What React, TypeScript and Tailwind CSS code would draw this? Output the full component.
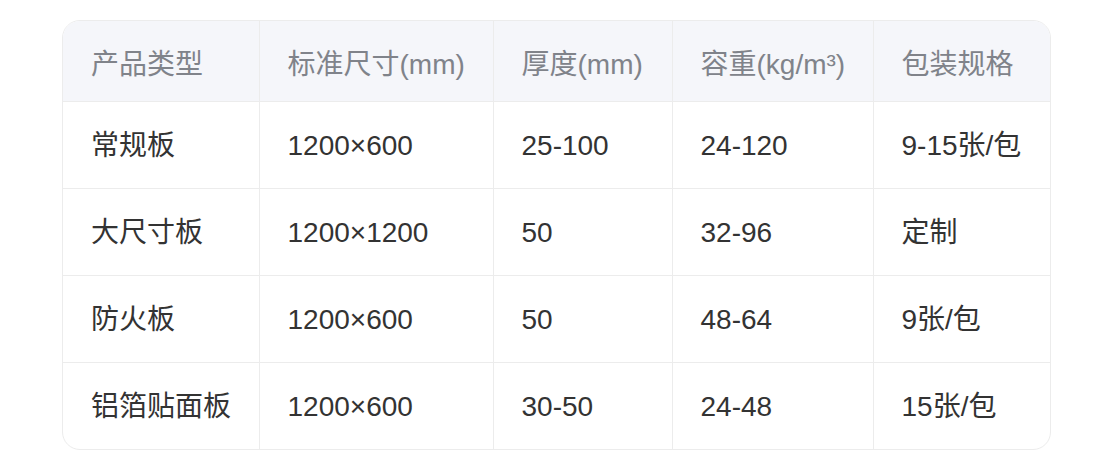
const headers = ["产品类型", "标准尺寸(mm)", "厚度(mm)", "容重(kg/m³)", "包装规格"];

const rows = [
  ["常规板", "1200×600", "25-100", "24-120", "9-15张/包"],
  ["大尺寸板", "1200×1200", "50", "32-96", "定制"],
  ["防火板", "1200×600", "50", "48-64", "9张/包"],
  ["铝箔贴面板", "1200×600", "30-50", "24-48", "15张/包"],
];

const widths = ["w-[196px]", "w-[234px]", "w-[179px]", "w-[201px]", "w-[177px]"];

export default function App() {
  return (
    <div className="min-h-[457px] bg-white px-[62px] pt-[20px] font-['Liberation_Sans','Noto_Sans_CJK_SC',sans-serif]">
      <div className="w-[989px] overflow-hidden rounded-[18px] border border-[#ececec]">
        <table className="w-full table-fixed border-collapse text-[28px]">
          <thead>
            <tr className="h-[80px] bg-[#f5f6fa]">
              {headers.map((h, i) => (
                <th
                  key={h}
                  className={`${widths[i]} whitespace-nowrap border-l border-[#ececec] pl-[28px] pr-[2px] pt-[8px] text-left font-normal text-[#80838a] first:border-l-0`}
                >
                  {h}
                </th>
              ))}
            </tr>
          </thead>
          <tbody>
            {rows.map((r) => (
              <tr key={r[0]} className="h-[87px] border-t border-[#ececec]">
                {r.map((c, i) => (
                  <td
                    key={i}
                    className="whitespace-nowrap border-l border-[#ececec] pl-[28px] pr-[2px] pt-[3px] text-[#333333] first:border-l-0"
                  >
                    {c}
                  </td>
                ))}
              </tr>
            ))}
          </tbody>
        </table>
      </div>
    </div>
  );
}
